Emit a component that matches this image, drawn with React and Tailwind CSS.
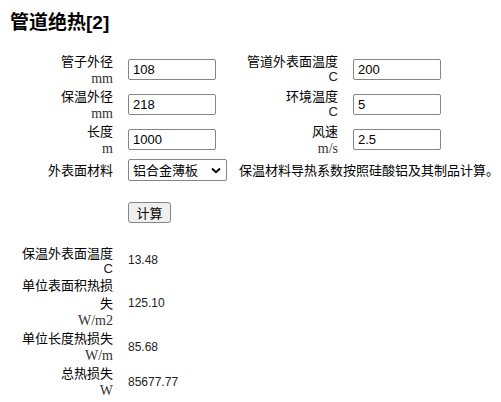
const inputs = [
  { label: "管子外径", unit: "mm", value: "108", label2: "管道外表面温度", unit2: "C", value2: "200" },
  { label: "保温外径", unit: "mm", value: "218", label2: "环境温度", unit2: "C", value2: "5" },
  { label: "长度", unit: "m", value: "1000", label2: "风速", unit2: "m/s", value2: "2.5" },
]

const results = [
  { label: "保温外表面温度", unit: "C", value: "13.48" },
  { label: "单位表面积热损失", unit: "W/m2", value: "125.10" },
  { label: "单位长度热损失", unit: "W/m", value: "85.68" },
  { label: "总热损失", unit: "W", value: "85677.77" },
]

const cjk = "font-['Microsoft_YaHei','Noto_Sans_CJK_SC',sans-serif]"

function Unit({ u }) {
  return (
    <div
      className={
        u === "C"
          ? "font-['Liberation_Sans',sans-serif] text-[13px] leading-[14px] text-[#222]"
          : "font-['Liberation_Serif',serif] text-[14px] leading-[17px] text-[#333]"
      }
    >
      {u}
    </div>
  )
}

function Field({ value }) {
  return (
    <input
      defaultValue={value}
      className="w-[88px] h-[21px] border border-[#858585] rounded-[2px] px-[4px] text-[13px] text-black font-['Liberation_Sans',sans-serif] outline-none bg-white"
    />
  )
}

export default function App() {
  return (
    <div className={`bg-white min-h-screen w-[501px] text-[13px] text-black leading-[18px] ${cjk}`}>
      <div className="pl-[10px] pt-[9px] h-[33px] text-[19px] font-bold leading-[24px]">
        管道绝热<span className="font-['Liberation_Sans',sans-serif]">[2]</span>
      </div>

      {/* 输入 */}
      <div className="mt-[19px] grid grid-cols-[97px_88px_107px_88px] gap-x-[15px] pl-[16px] items-center">
        {inputs.map((r) => (
          <div key={r.label} className="contents">
            <div className="text-right h-[35px]">
              <div>{r.label}</div>
              <Unit u={r.unit} />
            </div>
            <Field value={r.value} />
            <div className="text-right h-[35px]">
              <div>{r.label2}</div>
              <Unit u={r.unit2} />
            </div>
            <Field value={r.value2} />
          </div>
        ))}
        <div className="text-right h-[26px] leading-[26px]">外表面材料</div>
        <div className="relative w-[99px] h-[22px] border border-[#858585] rounded-[2px] flex items-center pl-[4px] bg-white">
          <span>铝合金薄板</span>
          <svg className="absolute right-[5px] top-[7px]" width="10" height="7" viewBox="0 0 10 7">
            <path d="M1 1.5 L5 5.2 L9 1.5" fill="none" stroke="#000" strokeWidth="1.9" />
          </svg>
        </div>
        <div className="col-span-2 ml-[8px] whitespace-nowrap">保温材料导热系数按照硅酸铝及其制品计算。</div>
      </div>

      <div className="pl-[128px] mt-[19px]">
        <button className="block w-[43px] h-[21px] border border-[#858585] rounded-[3px] bg-[#efefef] text-[13px] leading-[19px]">
          计算
        </button>
      </div>

      {/* 结果 */}
      <div className="mt-[21px] grid grid-cols-[97px_auto] gap-x-[15px] pl-[16px] items-center">
        {results.map((r) => (
          <div key={r.label} className="contents">
            <div className="text-right">
              <div>{r.label}</div>
              <Unit u={r.unit} />
            </div>
            <div className="font-['Liberation_Sans',sans-serif] text-[12px] text-[#222]">{r.value}</div>
          </div>
        ))}
      </div>
    </div>
  )
}
